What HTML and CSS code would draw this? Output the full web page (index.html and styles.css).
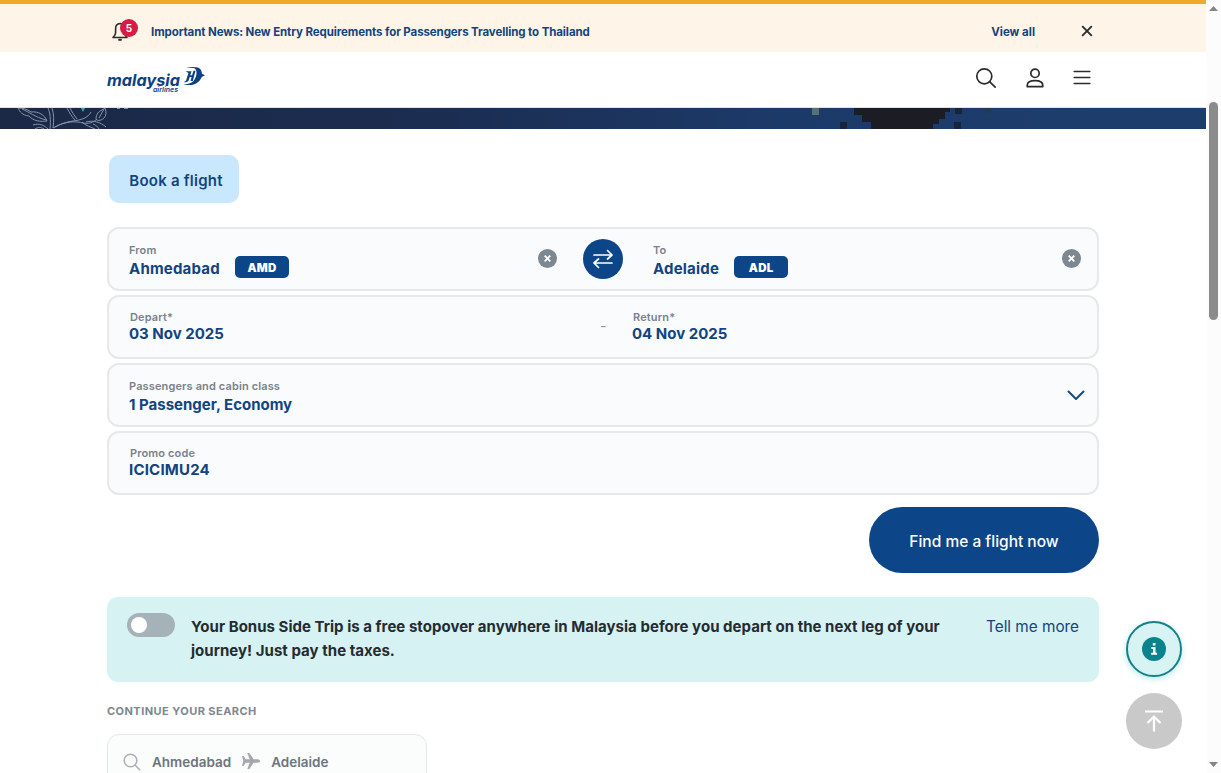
FILE: index.html
```
<!DOCTYPE html>
<html lang="en">
<head>
  <meta charset="UTF-8">
  <title>Malaysia Airlines</title>
  <link rel="stylesheet" href="styles.css">
</head>
<body>
  <div class="page">
    <div class="news-bar">
      <div class="container news-inner">
        <div class="bell">
          <svg width="16" height="20" viewBox="0 0 16 20" fill="none" stroke="#2b2b2b" stroke-width="1.6" stroke-linejoin="round">
            <path d="M8 1.5C5 1.8 3.6 3.8 3.6 6.5v4.2c0 2-.8 3-2.6 4.8h14c-1.800-1.800-2.600-2.800-2.600-4.800V6.500C12.400 3.800 11 1.800 8 1.500z"/>
            <path d="M6.300 17.800h3.400" stroke-width="2"/>
          </svg>
          <span class="badge">5</span>
        </div>
        <a class="news-text">Important News: New Entry Requirements for Passengers Travelling to Thailand</a>
        <a class="view-all">View all</a>
        <svg class="news-close" width="12" height="12" viewBox="0 0 12 12" stroke="#2b2b2b" stroke-width="1.900">
          <path d="M1.200 1.200l9.600 9.600M10.800 1.200l-9.600 9.600"/>
        </svg>
      </div>
    </div>

    <header class="header">
      <div class="container header-inner">
        <svg class="logo" width="100" height="30" viewBox="0 0 100 30">
          <text class="logo-name" x="0" y="20.500" textLength="73" lengthAdjust="spacingAndGlyphs">malaysia</text>
          <text class="logo-sub" x="46" y="27" textLength="25" lengthAdjust="spacingAndGlyphs">airlines</text>
          <g fill="#0b4185">
            <path d="M79 2.800C83 1.700 88 1.600 91 2.500c2.600.8 3.600 3.200 4 6.300l3 1.400-3.300 1.700c-1.700 4.200-5.500 7.200-9.700 8h-9c4.500-.6 8.500-1.500 10.500-3.800 2.300-2.600 3.500-6.800 2.900-9.800-.4-2-1.400-3-3.400-3.300z"/>
            <path d="M78.500 6.300h6l-1.300 4h1.900l1.300-4.500h2.100l-2.700 10.200h-2.200l1-4h-1.900l-1 3.300c-.5 1.400-2 2-5.200 2 1.700-.7 2.500-1.500 2.900-2.800l2-6.500z"/>
          </g>
        </svg>
        <div class="header-icons">
          <svg width="22" height="22" viewBox="0 0 22 22" fill="none" stroke="#2b2b2b" stroke-width="1.700" stroke-linecap="round">
            <circle cx="9.300" cy="9.300" r="7.500"/>
            <path d="M14.800 14.800l5.400 5.400"/>
          </svg>
          <svg width="18" height="20" viewBox="0 0 18 20" fill="none" stroke="#2b2b2b" stroke-width="1.700" stroke-linejoin="round">
            <circle cx="9" cy="5.300" r="4.200"/>
            <path d="M1.200 18.600v-1.200c0-3.200 3-4.700 7.800-4.700s7.800 1.500 7.800 4.700v1.200z"/>
          </svg>
          <svg width="18" height="16" viewBox="0 0 18 16" stroke="#2b2b2b" stroke-width="1.600" stroke-linecap="round">
            <path d="M1.200 1.500h15.600M1.200 7.500h15.600M1.200 13.500h15.600"/>
          </svg>
        </div>
      </div>
    </header>

    <div class="hero">
      <!-- floral line work -->
      <svg width="130" height="21" viewBox="0 0 130 21" fill="none" stroke="#8494a8" stroke-width="1">
        <path d="M18 0c2 4 4 7 11 8 4 5 12 6 18 5C45 7 38 3 31 4 27 1 23 0 18 0z"/>
        <path d="M22 1c7 3 13 8 24 11M33 17c6-2 11 0 15 4M35 21c3-2 6-2 9 0"/>
        <path d="M48 0c2 4 3 12 2 21M52 0c2 6 2 13 1 20 7-4 13-6 20-7 8-1 15-3 18-9M55 19c11-6 21-6 28-4 5 1 10 0 14-4"/>
        <path d="M67 0c2 4 5 9 8 12M70 0c2 4 4 7 7 11"/>
        <path d="M105 0c2 5 1 10-4 12-3 1-5 0-5-1 0-5 3-8 6-9zM99 10l5-9"/>
        <path d="M82 14c4 4 9 5 13 7M86 14c8-2 14 0 20 5M93 16c3 1 5 3 6 5"/>
        <path d="M81 0h4l-2 4z" fill="#48a3ad" stroke="none"/>
        <path d="M117 0h3M124 0h4" stroke-width="2"/>
      </svg>
      <!-- dark pixel shapes -->
      <svg width="240" height="21" viewBox="0 0 240 21">
        <path d="M44 0h96v4h-5v7h-6v5h-6v5H61v-7h-9V7h-8z" fill="#1c1c24"/>
        <path d="M30 14h7v7h-7zM145 0h7v6h-7zM144 14h7v7h-7z" fill="#16243c"/>
        <path d="M175 0h6v5h-6z" fill="#223a55"/>
        <path d="M2 0h7v7H2z" fill="#587273"/>
      </svg>
    </div>

    <main class="container main">
      <button class="tab">Book a flight</button>

      <form class="booking">
        <div class="field route">
          <div class="place">
            <div>
              <label>From</label>
              <div class="value">Ahmedabad <span class="code">AMD</span></div>
            </div>
            <svg class="clear" width="19" height="19" viewBox="0 0 19 19">
              <circle cx="9.500" cy="9.500" r="9.500" fill="#7c8790"/>
              <path d="M6.700 6.700l5.600 5.600M12.300 6.700l-5.600 5.600" stroke="#fff" stroke-width="1.900"/>
            </svg>
          </div>
          <div class="swap">
            <svg width="20" height="20" viewBox="0 0 20 20" fill="none" stroke="#fff" stroke-width="1.700" stroke-linecap="round" stroke-linejoin="round">
              <path d="M1 6h18M14.500 1.500L19 6l-4.500 4M19 14H1M5.500 10L1 14l4.500 4.500"/>
            </svg>
          </div>
          <div class="place">
            <div>
              <label>To</label>
              <div class="value">Adelaide <span class="code">ADL</span></div>
            </div>
            <svg class="clear" width="19" height="19" viewBox="0 0 19 19">
              <circle cx="9.500" cy="9.500" r="9.500" fill="#7c8790"/>
              <path d="M6.700 6.700l5.600 5.600M12.300 6.700l-5.600 5.600" stroke="#fff" stroke-width="1.900"/>
            </svg>
          </div>
        </div>

        <div class="field dates">
          <div class="date">
            <label>Depart*</label>
            <div class="value">03 Nov 2025</div>
          </div>
          <span class="dash">-</span>
          <div class="date">
            <label>Return*</label>
            <div class="value">04 Nov 2025</div>
          </div>
        </div>

        <div class="field passengers">
          <div>
            <label>Passengers and cabin class</label>
            <div class="value">1 Passenger, Economy</div>
          </div>
          <svg width="18" height="11" viewBox="0 0 18 11" fill="none" stroke="#164a7c" stroke-width="2" stroke-linecap="round" stroke-linejoin="round">
            <path d="M1.500 1.500L9 9l7.500-7.500"/>
          </svg>
        </div>

        <div class="field promo">
          <div>
            <label>Promo code</label>
            <div class="value">ICICIMU24</div>
          </div>
        </div>

        <button class="search-btn" type="button">Find me a flight now</button>
      </form>

      <div class="bonus">
        <span class="toggle"></span>
        <p>Your Bonus Side Trip is a free stopover anywhere in Malaysia before you depart on the next leg of your<br>journey! Just pay the taxes.</p>
        <a>Tell me more</a>
      </div>

      <h2>CONTINUE YOUR SEARCH</h2>
      <div class="recent">
        <svg width="18" height="18" viewBox="0 0 18 18" fill="none" stroke="#a9b1b7" stroke-width="1.500" stroke-linecap="round">
          <circle cx="7.500" cy="7.500" r="6.300"/>
          <path d="M12.200 12.200l4.500 4.500"/>
        </svg>
        <span>Ahmedabad</span>
        <svg class="plane" width="18" height="16" viewBox="0 0 18 16" fill="#a3a8ac">
          <path d="M0 3h1.600l2.200 3.300h3.900L5.300 0h2l4.300 6.300h3.800C17 6.300 18 7.100 18 8s-1 1.700-2.600 1.700h-3.800L7.300 16h-2l2.400-6.300H3.800L1.600 13H0l1.300-5z"/>
        </svg>
        <span>Adelaide</span>
      </div>
    </main>

    <div class="floating">
      <button class="info-btn">
        <svg width="24" height="24" viewBox="0 0 24 24">
          <circle cx="12" cy="12" r="12" fill="#0b838c"/>
          <path d="M10.800 6h2.700v2.400h-2.700zM9.400 10h4.100v5.800H15v2H9.200v-2H11v-3.900H9.400z" fill="#fff"/>
        </svg>
      </button>
      <button class="top-btn">
        <svg width="20" height="22" viewBox="0 0 20 22" fill="none" stroke="#fff" stroke-width="2.200">
          <path d="M1 1.500h18M10 21.500V6.500M3.500 13L10 6.500l6.500 6.500"/>
        </svg>
      </button>
    </div>
  </div>

  <div class="scrollbar">
    <svg width="9" height="5" viewBox="0 0 9 5"><path d="M0 5l4.500-5L9 5z" fill="#858585"/></svg>
    <span class="thumb"></span>
    <svg class="down" width="9" height="5" viewBox="0 0 9 5"><path d="M0 0h9L4.500 5z" fill="#858585"/></svg>
  </div>
</body>
</html>
```
FILE: styles.css
```
* {
  box-sizing: border-box;
}

body {
  margin: 0;
  height: 773px;
  display: flex;
  overflow: hidden;
  background-color: #fff;
  font-family: Inter, "Liberation Sans", sans-serif;
  color: #114481;
}

button {
  border: none;
  font-family: inherit;
  color: inherit;
  cursor: pointer;
}

svg {
  display: block;
  flex-shrink: 0;
}

.page {
  width: 1206px;
  height: 773px;
  overflow: hidden;
}

.container {
  width: 992px;
  margin: 0 auto;
}

/* News bar */
.news-bar {
  height: 52px;
  border-top: 4px solid #efaa2c;
  background-color: #fef4e7;
}

.news-inner {
  height: 48px;
  display: flex;
  align-items: center;
  padding: 7px 6px 0 5px;
  font-size: 11.5px;
  font-weight: 700;
}

.bell {
  position: relative;
  width: 39px;
}

.badge {
  position: absolute;
  top: -3px;
  left: 8px;
  width: 18px;
  height: 18px;
  border-radius: 50%;
  background-color: #d61c43;
  color: #fff;
  font-size: 10px;
  line-height: 18px;
  text-align: center;
}

.news-text {
  letter-spacing: -0.1px;
}

.view-all {
  margin-left: auto;
  margin-right: 46px;
}

.news-close {
  margin-top: -2px;
}

/* Header */
.header {
  height: 56px;
  border-bottom: 1px solid #dfe3e8;
}

.header-inner {
  display: flex;
  justify-content: space-between;
  padding: 13px 8px 0 0;
}

.logo-name {
  font-size: 16px;
  font-weight: 700;
  font-style: italic;
  fill: #0b4185;
}

.logo-sub {
  font-size: 6.5px;
  font-weight: 600;
  font-style: italic;
  fill: #0b4185;
}

.header-icons {
  height: 25px;
  display: flex;
  align-items: center;
  gap: 29px;
}

.hero {
  height: 21px;
  display: flex;
  padding-right: 156px;
  justify-content: space-between;
  background: linear-gradient(90deg, #1b2846 0%, #1b2d50 35%, #1c3a69 65%, #1d3e6c 100%);
}

/* Booking form */
.main {
  padding-top: 26px;
}

.tab {
  display: block;
  width: 130px;
  height: 48px;
  margin-left: 2px;
  padding: 3px 0 0 4px;
  border-radius: 10px;
  background-color: #c9e8fd;
  font-size: 15px;
  font-weight: 600;
  letter-spacing: 0.23px;
}

.booking {
  display: flex;
  flex-direction: column;
  gap: 4px;
  margin-top: 24px;
}

.field {
  height: 64px;
  display: flex;
  border: 2px solid #e6e8e9;
  border-radius: 12px;
  background-color: #fafbfc;
}

.field label {
  display: block;
  font-size: 11px;
  font-weight: 600;
  letter-spacing: 0.13px;
  line-height: 14px;
  color: #79828c;
}

.value {
  display: flex;
  align-items: center;
  height: 22px;
  font-size: 15px;
  font-weight: 650;
}

.route .value,
.promo .value {
  letter-spacing: 0.2px;
}

.code {
  width: 54px;
  height: 22px;
  margin: -3px 0 0 15px;
  padding-top: 1px;
  border-radius: 5px;
  background-color: #0d4688;
  color: #fff;
  font-size: 11.5px;
  font-weight: 900;
  line-height: 22px;
  text-align: center;
}

.place {
  display: flex;
  justify-content: space-between;
  width: 428px;
  padding-top: 14px;
}

.route {
  padding-left: 20px;
}

.clear {
  margin-top: 6px;
}

.swap {
  width: 40px;
  height: 40px;
  display: flex;
  align-items: center;
  justify-content: center;
  margin: 10px 30px 0 26px;
  border-radius: 50%;
  background-color: #0d4688;
}

.dates {
  padding: 13px 20px 0;
}

.date label {
  padding-left: 1px;
}

.dates .date:first-child {
  width: 471px;
}

.dates .value,
.promo .value {
  margin-top: -1px;
  height: 20px;
}

.dash {
  width: 32px;
  padding-top: 7px;
  color: #8c949b;
  font-size: 14px;
}

.passengers {
  justify-content: space-between;
  padding: 14px 12px 0 20px;
}

.passengers svg {
  margin-top: 11px;
}

.promo {
  padding: 13px 20px 0;
}

.promo label {
  padding-left: 1px;
}

.search-btn {
  width: 230px;
  height: 66px;
  align-self: flex-end;
  margin-top: 8px;
  padding: 3px 0 0;
  border-radius: 33px;
  background-color: #0d4688;
  color: #fff;
  font-size: 15.5px;
  font-weight: 500;
}

/* Bonus side trip */
.bonus {
  height: 85px;
  display: flex;
  margin-top: 24px;
  padding: 16px 20px 0;
  border-radius: 11px;
  background-color: #d7f2f2;
}

.toggle {
  width: 48px;
  height: 24px;
  margin-right: 16px;
  padding: 4px;
  border-radius: 12px;
  background-color: #a5b2b9;
}

.toggle::before {
  content: "";
  display: block;
  width: 16px;
  height: 16px;
  border-radius: 50%;
  background-color: #fff;
}

.bonus p {
  margin: 2px 0 0;
  color: #242b31;
  font-size: 15px;
  font-weight: 700;
  letter-spacing: 0.03px;
  line-height: 24px;
  white-space: nowrap;
}

.bonus a {
  margin: 2px 0 0 auto;
  font-size: 15.3px;
  line-height: 24px;
}

/* Recent search */
h2 {
  margin: 22px 0 0;
  font-size: 11px;
  font-weight: 700;
  letter-spacing: 0.45px;
  line-height: 14px;
  color: #7c8791;
}

.recent {
  width: 320px;
  height: 60px;
  display: flex;
  margin-top: 16px;
  padding: 18px 15px;
  border: 1px solid #e4e7e9;
  border-radius: 12px;
  background-color: #fbfcfc;
  color: #6c757c;
  font-size: 13.5px;
  font-weight: 600;
  line-height: 18px;
}

.recent span {
  margin-left: 11px;
}

.recent .plane {
  margin-left: 11px;
}

/* Floating buttons */
.floating {
  position: fixed;
  top: 621px;
  left: 1126px;
  display: flex;
  flex-direction: column;
  gap: 16px;
}

.floating button {
  width: 56px;
  height: 56px;
  display: flex;
  align-items: center;
  justify-content: center;
  padding: 0;
  border-radius: 50%;
}

.floating .info-btn {
  border: 2px solid #148289;
  background-color: #d7f3f3;
  box-shadow: 0 2px 6px #b8e8e8;
}

.floating .top-btn {
  background-color: #c9c9c9;
}

/* Scrollbar */
.scrollbar {
  width: 15px;
  height: 773px;
  display: flex;
  flex-direction: column;
  align-items: center;
  padding: 6px 0;
  background-color: #fcfcfc;
}

.thumb {
  width: 9px;
  height: 218px;
  margin-top: 91px;
  border-radius: 5px;
  background-color: #8b8b8b;
}

.down {
  margin-top: auto;
}
```
